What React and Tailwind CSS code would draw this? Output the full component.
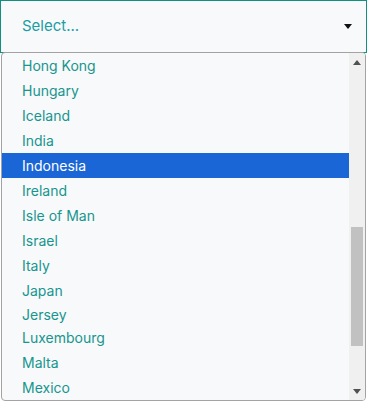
const countries = [
  'Hong Kong', 'Hungary', 'Iceland', 'India', 'Indonesia', 'Ireland', 'Isle of Man',
  'Israel', 'Italy', 'Japan', 'Jersey', 'Luxembourg', 'Malta', 'Mexico'
]

export default function App() {
  const selected = 'Indonesia'
  return (
    <div className="relative w-[367px] h-[401px] bg-white" style={{ fontFamily: 'Inter, "Noto Sans", sans-serif' }}>
      <div className="h-[53px] border border-[#10907f] bg-[#f8f9fa] flex items-center justify-between pl-[21px] pr-[14px]">
        <span className="text-[15px] text-[#1a9ea4]">Select...</span>
        <svg width="8" height="5" viewBox="0 0 8 5"><path d="M0 0h8L4 5z" fill="#111" /></svg>
      </div>

      <div className="absolute left-[1px] top-[52px] w-[365px] h-[349px] border border-[#a3a3a3] rounded-[4px] bg-[#f8f9fa] flex overflow-hidden">
        <ul className="flex-1">
          {countries.map((c) => (
            <li
              key={c}
              className={`${c === 'Jersey' ? 'h-[22px]' : 'h-[25px]'} flex items-center pl-[20px] text-[14px] ${c === selected ? 'bg-[#1a66d6] text-white' : 'text-[#17958f]'}`}
            >
              {c}
            </li>
          ))}
        </ul>
        <div className="w-[16px] bg-[#f0f0f0] flex flex-col items-center">
          <div className="h-[18px] flex items-center justify-center">
            <svg width="8" height="5" viewBox="0 0 8 5"><path d="M0 5h8L4 0z" fill="#505050" /></svg>
          </div>
          <div className="flex-1 w-full px-[2px] pt-[156px] pb-[36px]">
            <div className="h-full bg-[#c1c1c1]" />
          </div>
          <div className="h-[18px] flex items-center justify-center">
            <svg width="8" height="5" viewBox="0 0 8 5"><path d="M0 0h8L4 5z" fill="#505050" /></svg>
          </div>
        </div>
      </div>
    </div>
  )
}
